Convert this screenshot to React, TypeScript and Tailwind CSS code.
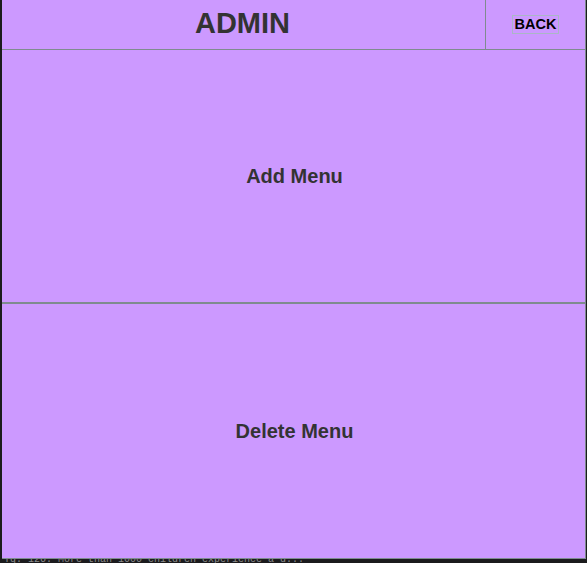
export default function App() {
    return (
        <div className="w-[587px] h-[563px] bg-[#1b1b1d] flex flex-col overflow-hidden font-['Liberation_Sans',Arial,sans-serif]">
            <div className="h-[559px] ml-[2px] mr-[1px] flex flex-col bg-[#cc99ff] border-r border-b border-[#7f8b8f]">
                {/* Header */}
                <div className="h-[50px] flex border-b border-[#7f8b8f]">
                    <div className="flex-1 flex items-center justify-center text-[29px] font-bold text-[#333333] pb-[2px] pr-[2px]">
                        ADMIN
                    </div>
                    <button className="w-[100px] flex items-center justify-center border-l border-[#7f8b8f] bg-[#cc99ff]">
                        <span className="h-[19px] flex items-center border border-[#aab6c6] px-[2px] text-[14.5px] font-bold text-black">
                            BACK
                        </span>
                    </button>
                </div>

                {/* Menu buttons */}
                <button className="h-[254px] flex items-center justify-center border-b-2 border-[#7f8b8f] text-[20px] font-bold text-[#333333] pl-[2px]">
                    Add Menu
                </button>
                <button className="flex-1 flex items-center justify-center text-[20px] font-bold text-[#333333] pl-[2px]">
                    Delete Menu
                </button>
            </div>

            {/* terminal behind the window */}
            <div className="h-[4px] overflow-hidden pl-[4px] bg-[#1b1b1d]">
                <div className="-mt-[5px] font-['Liberation_Mono',monospace] text-[10px] leading-[12px] text-[#8a8a8a] whitespace-nowrap">
                    Tq. 126. More than 1000 children   experience a d...
                </div>
            </div>
        </div>
    );
}
